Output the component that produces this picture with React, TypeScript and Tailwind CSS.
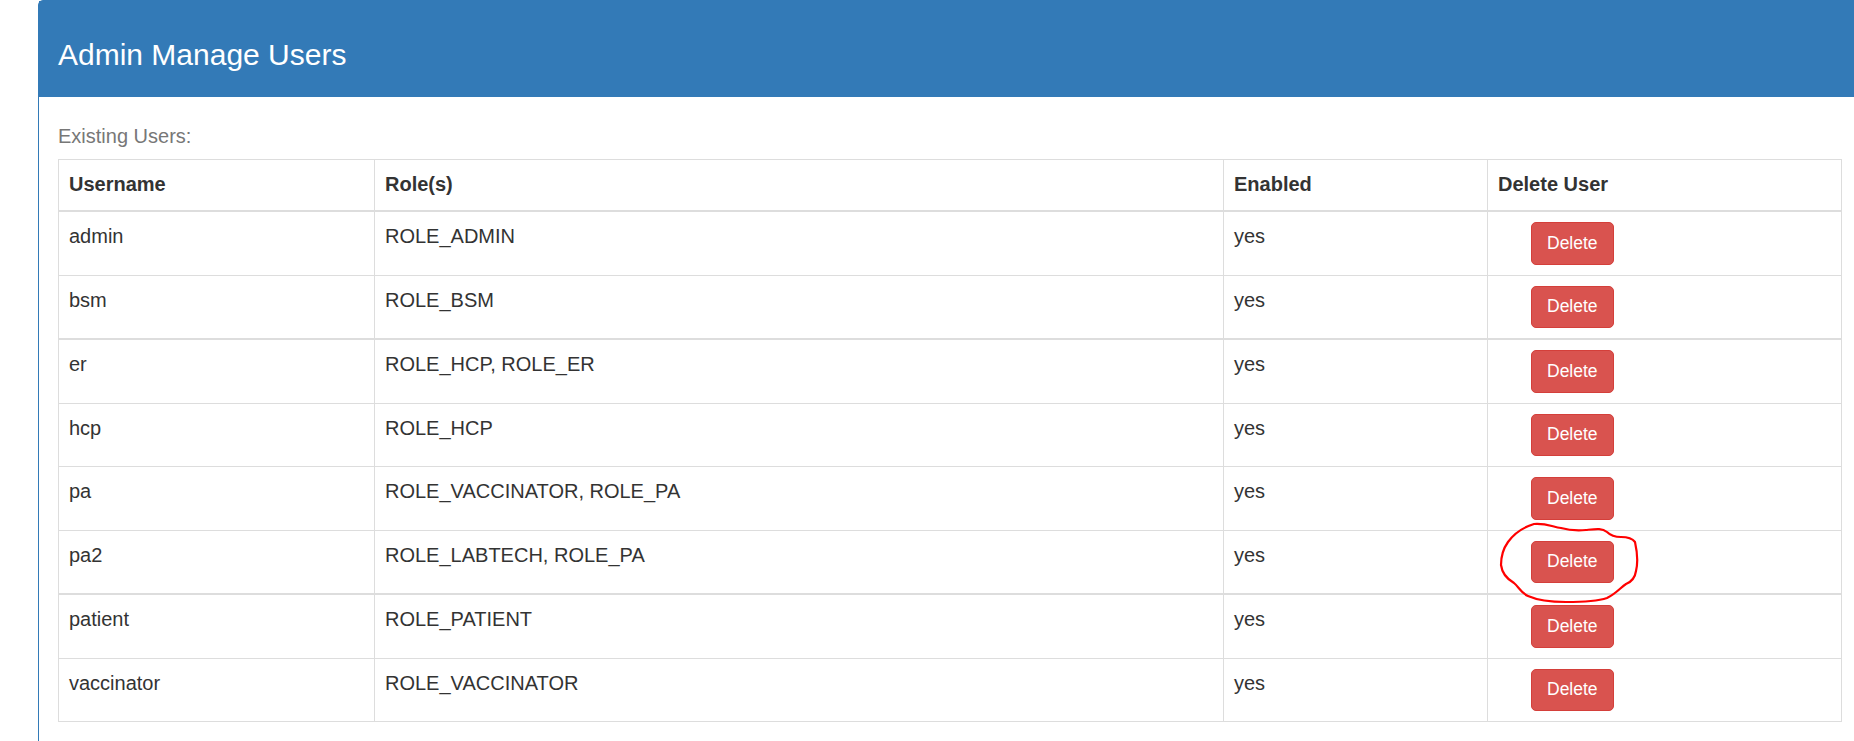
const USERS = [
  { name: 'admin', roles: 'ROLE_ADMIN', enabled: 'yes' },
  { name: 'bsm', roles: 'ROLE_BSM', enabled: 'yes' },
  { name: 'er', roles: 'ROLE_HCP, ROLE_ER', enabled: 'yes', thick: true },
  { name: 'hcp', roles: 'ROLE_HCP', enabled: 'yes' },
  { name: 'pa', roles: 'ROLE_VACCINATOR, ROLE_PA', enabled: 'yes' },
  { name: 'pa2', roles: 'ROLE_LABTECH, ROLE_PA', enabled: 'yes', circled: true },
  { name: 'patient', roles: 'ROLE_PATIENT', enabled: 'yes', thick: true },
  { name: 'vaccinator', roles: 'ROLE_VACCINATOR', enabled: 'yes' },
];

// hand-drawn red loop around one of the buttons
function Scribble() {
  return (
    <svg
      className="pointer-events-none absolute left-[9px] top-[-10px]"
      width="144"
      height="86"
      viewBox="1496 520 144 86"
      fill="none"
    >
      <path
        d="M1533 523 C1545 522 1552 526 1560 527 C1567 529 1573 530 1585 529 C1595 528 1601 527 1606 531 C1609 534 1612 536 1620 536 C1626 536 1631 537 1634 541 C1636 550 1637 562 1635 570 C1634 577 1630 581 1625 583 C1620 586 1616 592 1606 597 C1597 600 1585 601 1565 601 C1548 601 1536 599 1527 595 C1520 592 1518 586 1513 582 C1506 578 1501 572 1500 564 C1500 556 1502 548 1507 541 C1512 534 1520 527 1533 523 Z"
        stroke="#ff0000"
        strokeWidth="2.2"
        strokeLinejoin="round"
      />
    </svg>
  );
}

export default function App() {
  return (
    <div className="h-[741px] w-full overflow-hidden bg-white font-['Liberation_Sans',Arial,sans-serif] text-[#333]">
      <div className="ml-[38px] w-[1840px] rounded-t-[5px] border border-[#337ab7]">
        <div className="h-[96px] bg-[#337ab7] px-[19px] pt-[37px]">
          <h3 className="text-[30px] leading-[33px] font-normal text-white">Admin Manage Users</h3>
        </div>

        <div className="px-[19px] pt-[25px] pb-[80px]">
          <p className="mb-[8px] text-[20px] leading-[28.6px] text-[#777]">Existing Users:</p>

          <table className="w-[1783px] table-fixed border-collapse text-[20px] leading-[28.6px]">
            <colgroup>
              <col className="w-[316px]" />
              <col className="w-[849px]" />
              <col className="w-[264px]" />
              <col className="w-[354px]" />
            </colgroup>
            <thead>
              <tr>
                <th className="border border-b-2 border-[#ddd] px-[10px] pt-[10px] pb-[12px] text-left align-bottom font-bold">Username</th>
                <th className="border border-b-2 border-[#ddd] px-[10px] pt-[10px] pb-[12px] text-left align-bottom font-bold">Role(s)</th>
                <th className="border border-b-2 border-[#ddd] px-[10px] pt-[10px] pb-[12px] text-left align-bottom font-bold">Enabled</th>
                <th className="border border-b-2 border-[#ddd] px-[10px] pt-[10px] pb-[12px] text-left align-bottom font-bold">Delete User</th>
              </tr>
            </thead>
            <tbody>
              {USERS.map((u) => (
                <tr key={u.name}>
                  <td className={`border border-[#ddd] p-[10px] align-top ${u.thick ? 'border-t-2' : ''}`}>{u.name}</td>
                  <td className={`border border-[#ddd] p-[10px] align-top ${u.thick ? 'border-t-2' : ''}`}>{u.roles}</td>
                  <td className={`border border-[#ddd] p-[10px] align-top ${u.thick ? 'border-t-2' : ''}`}>{u.enabled}</td>
                  <td className={`relative border border-[#ddd] p-[10px] align-top ${u.thick ? 'border-t-2' : ''}`}>
                    <button
                      type="button"
                      className="ml-[33px] block h-[42.5px] rounded-[5px] border border-[#d43f3a] bg-[#d9534f] px-[15px] text-[17.5px] leading-[25px] text-white"
                    >
                      Delete
                    </button>
                    {u.circled && <Scribble />}
                  </td>
                </tr>
              ))}
            </tbody>
          </table>
        </div>
      </div>
    </div>
  );
}
